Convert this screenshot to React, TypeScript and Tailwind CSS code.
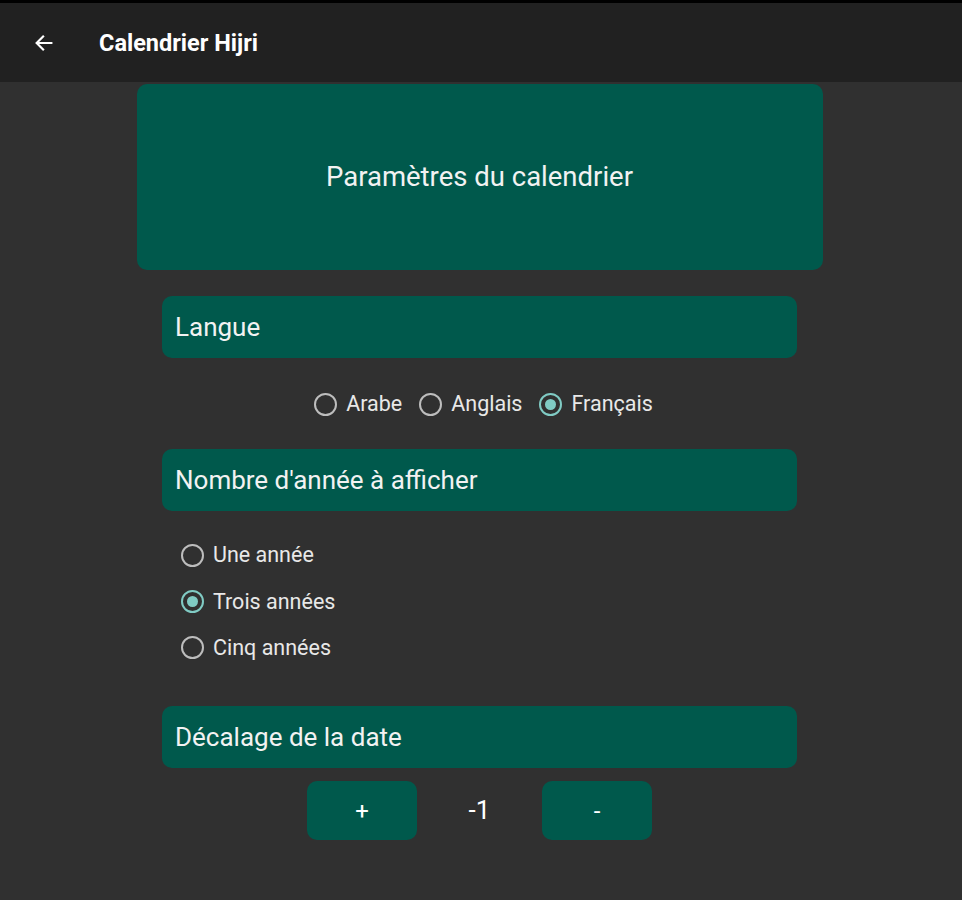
import { useState } from 'react';

const Radio = ({ checked, label, onClick }: { checked: boolean; label: string; onClick: () => void }) => (
  <button onClick={onClick} className="flex items-center gap-[9px] text-[21.5px] text-[#e8e8e8]">
    <span
      className={
        'flex h-[23px] w-[23px] items-center justify-center rounded-full border-[2.5px] ' +
        (checked ? 'border-[#80cbc4]' : 'border-[#bdbdbd]')
      }
    >
      {checked && <span className="h-[11px] w-[11px] rounded-full bg-[#80cbc4]" />}
    </span>
    <span>{label}</span>
  </button>
);

const SectionTitle = ({ children }: { children: React.ReactNode }) => (
  <div className="flex h-[62px] w-[635px] items-center rounded-[10px] bg-[#00594c] px-[13px] text-[26px] text-[#f2f2f2]">
    {children}
  </div>
);

export default function App() {
  const [langue, setLangue] = useState('fr');
  const [annees, setAnnees] = useState(3);
  const [decalage, setDecalage] = useState(-1);

  return (
    <div className="min-h-[900px] w-[962px] bg-[#303030] font-['Roboto',sans-serif]">
      {/* Barre du haut */}
      <div className="h-[3px] bg-black" />
      <div className="flex h-[79px] items-center bg-[#212121] pl-[33px]">
        <svg width="22" height="22" viewBox="0 0 24 24" fill="none" stroke="white" strokeWidth="2.4" strokeLinecap="square">
          <path d="M20 12H5M11 5l-7 7 7 7" />
        </svg>
        <span className="ml-[44px] mt-[2px] text-[23.5px] font-bold text-white">Calendrier Hijri</span>
      </div>

      <div className="flex flex-col items-center pr-[3px] pt-[2px]">
        <div className="flex h-[186px] w-[686px] items-center justify-center rounded-[10px] bg-[#00594c] text-[27.5px] text-[#f2f2f2]">
          Paramètres du calendrier
        </div>

        <div className="mt-[26px]">
          <SectionTitle>Langue</SectionTitle>
        </div>
        <div className="mt-[30px] flex gap-[17px] pl-[8px]">
          <Radio checked={langue === 'ar'} label="Arabe" onClick={() => setLangue('ar')} />
          <Radio checked={langue === 'en'} label="Anglais" onClick={() => setLangue('en')} />
          <Radio checked={langue === 'fr'} label="Français" onClick={() => setLangue('fr')} />
        </div>

        <div className="mt-[29px]">
          <SectionTitle>Nombre d'année à afficher</SectionTitle>
        </div>
        <div className="mt-[28px] flex w-[635px] flex-col items-start gap-[14px] pl-[19px]">
          <Radio checked={annees === 1} label="Une année" onClick={() => setAnnees(1)} />
          <Radio checked={annees === 3} label="Trois années" onClick={() => setAnnees(3)} />
          <Radio checked={annees === 5} label="Cinq années" onClick={() => setAnnees(5)} />
        </div>

        <div className="mt-[42px]">
          <SectionTitle>Décalage de la date</SectionTitle>
        </div>
        <div className="mt-[13px] flex items-center">
          <button
            onClick={() => setDecalage(decalage + 1)}
            className="h-[59px] w-[110px] rounded-[10px] bg-[#00594c] text-[24px] text-white"
          >
            +
          </button>
          <span className="w-[125px] text-center text-[26px] text-white">{decalage}</span>
          <button
            onClick={() => setDecalage(decalage - 1)}
            className="h-[59px] w-[110px] rounded-[10px] bg-[#00594c] text-[24px] text-white"
          >
            -
          </button>
        </div>
      </div>
    </div>
  );
}
